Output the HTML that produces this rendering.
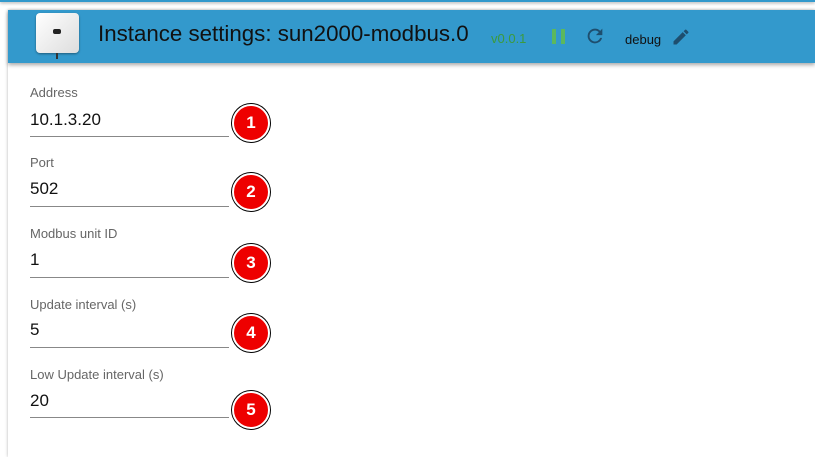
<!DOCTYPE html>
<html style="overflow:hidden;width:815px;height:457px"><head><style>
body{margin:0;width:815px;height:457px;background:#fff;font-family:"Liberation Sans",sans-serif;overflow:hidden;position:relative}
.top{position:absolute;left:0;top:0;width:815px;height:2px;background:#3399cc;box-shadow:0 1px 3px rgba(0,0,0,.4)}
.card{position:absolute;left:8px;top:10px;width:807px;height:447px;background:#fff;box-shadow:0 0 3px rgba(0,0,0,.3)}
.hdr{position:absolute;left:8px;top:10px;width:807px;height:53px;background:#3399cc;box-shadow:0 2px 4px rgba(0,0,0,.35)}
.icon{position:absolute;left:36px;top:13px;width:43px;height:40px;border-radius:4px;background:linear-gradient(135deg,#fff,#ddd);box-shadow:0 1px 2px rgba(0,0,0,.4)}
.icon:before{content:"";position:absolute;left:17px;top:16px;width:8px;height:5px;background:#222;border-radius:2px}
.icon:after{content:"";position:absolute;left:20px;top:40px;width:2px;height:6px;background:#333}
.title{position:absolute;left:98px;top:21px;font-size:22.3px;color:#111}
.ver{position:absolute;left:491px;top:31px;font-size:13px;color:#3c9a3c}
.pause{position:absolute;left:552px;top:29px;width:14px;height:15px}
.pause:before,.pause:after{content:"";position:absolute;top:0;width:4px;height:15px;background:#5cb85c}
.pause:before{left:0}.pause:after{left:9px}
.dbg{position:absolute;left:625px;top:32px;font-size:13px;color:#111}
.lab{position:absolute;left:30px;font-size:13px;color:#666}
.val{position:absolute;left:30px;font-size:17px;color:#111}
.line{position:absolute;left:30px;width:199px;height:1px;background:#888}
.b{position:absolute;left:232px;width:34px;height:34px;border-radius:50%;background:#e00;border:2px solid #fff;box-shadow:0 0 0 1px #000;color:#fff;font-weight:bold;font-size:17px;text-align:center;line-height:34px}
</style></head><body>
<div class="top"></div>
<div class="card"></div>
<div class="hdr"></div>
<div class="icon"></div>
<div class="title">Instance settings: sun2000-modbus.0</div>
<div class="ver">v0.0.1</div>
<div class="pause"></div>
<svg style="position:absolute;left:584px;top:25px" width="22" height="22" viewBox="0 0 24 24"><path fill="#1e4e6e" d="M17.65 6.35A7.95 7.95 0 0 0 12 4a8 8 0 1 0 7.73 10h-2.08A6 6 0 1 1 12 6c1.66 0 3.14.69 4.22 1.78L13 11h7V4l-2.35 2.35z"/></svg>
<div class="dbg">debug</div>
<svg style="position:absolute;left:671px;top:27px" width="20" height="20" viewBox="0 0 24 24"><path fill="#1e4e6e" d="M3 17.25V21h3.75L17.81 9.94l-3.75-3.75L3 17.25zM20.71 7.04a1 1 0 0 0 0-1.41l-2.34-2.34a1 1 0 0 0-1.41 0l-1.83 1.83 3.75 3.75 1.83-1.83z"/></svg>

<div class="lab" style="top:85px">Address</div><div class="val" style="top:110px">10.1.3.20</div><div class="line" style="top:136px"></div><div class="b" style="top:104px">1</div>
<div class="lab" style="top:155px">Port</div><div class="val" style="top:179px">502</div><div class="line" style="top:206px"></div><div class="b" style="top:173px">2</div>
<div class="lab" style="top:226px">Modbus unit ID</div><div class="val" style="top:250px">1</div><div class="line" style="top:277px"></div><div class="b" style="top:244px">3</div>
<div class="lab" style="top:297px">Update interval (s)</div><div class="val" style="top:320px">5</div><div class="line" style="top:347px"></div><div class="b" style="top:314px">4</div>
<div class="lab" style="top:367px">Low Update interval (s)</div><div class="val" style="top:391px">20</div><div class="line" style="top:417px"></div><div class="b" style="top:391px">5</div>
</body></html>
